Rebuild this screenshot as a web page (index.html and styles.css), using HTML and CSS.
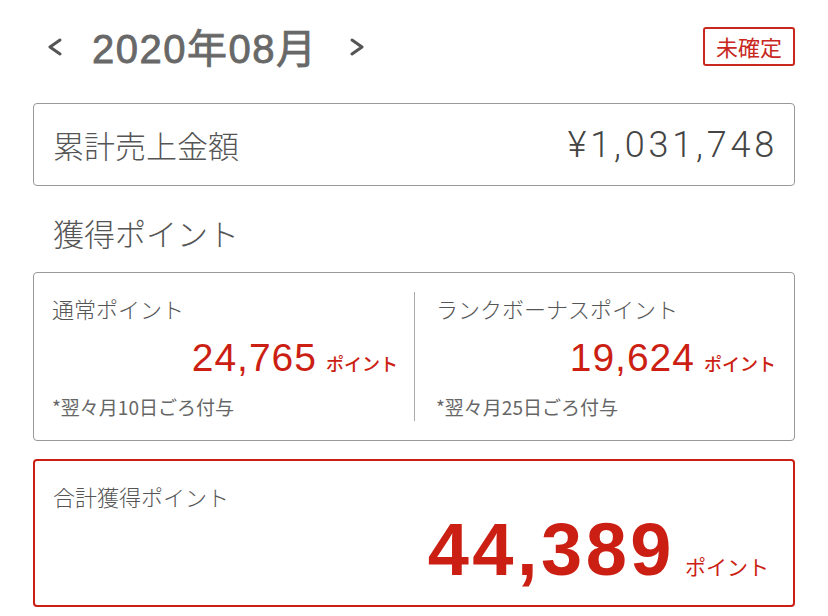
FILE: index.html
```html
<!DOCTYPE html>
<html lang="ja">
<head>
<meta charset="UTF-8" />
<meta name="viewport" content="width=device-width, initial-scale=1" />
<title>獲得ポイント</title>
<link rel="stylesheet" href="styles.css">
</head>
<body>

<div class="page">
  <div class="month-bar">
    <div class="month-nav">
      <svg class="chevron prev" width="16" height="18" viewBox="0 0 16 18"><path d="M13 2 L3 9 L13 16" /></svg>
      <span class="month">2020年08月</span>
      <svg class="chevron next" width="16" height="18" viewBox="0 0 16 18"><path d="M3 2 L13 9 L3 16" /></svg>
    </div>
    <span class="badge">未確定</span>
  </div>

  <div class="card sales">
    <span class="sales-label">累計売上金額</span>
    <span class="sales-amount">¥1,031,748</span>
  </div>

  <h2 class="section-title">獲得ポイント</h2>

  <div class="card points">
    <div class="point-col left">
      <div class="point-label">通常ポイント</div>
      <div class="point-value"><span class="num">24,765</span><span class="unit">ポイント</span></div>
      <div class="point-note">*翌々月10日ごろ付与</div>
    </div>
    <div class="divider"></div>
    <div class="point-col right">
      <div class="point-label">ランクボーナスポイント</div>
      <div class="point-value"><span class="num">19,624</span><span class="unit">ポイント</span></div>
      <div class="point-note">*翌々月25日ごろ付与</div>
    </div>
  </div>

  <div class="card total">
    <div class="point-label">合計獲得ポイント</div>
    <div class="total-value"><span class="total-num">44,389</span><span class="total-unit">ポイント</span></div>
  </div>
</div>

</body>
</html>
```

FILE: styles.css
```css
body {
  margin: 0;
  background: #fff;
  color: #555;
  font-family: "Liberation Sans", "Noto Sans CJK JP", sans-serif;
}
.page {
  width: 762px;
  margin: 0 auto;
  padding-top: 24px;
}
.month-bar {
  display: flex;
  align-items: center;
  justify-content: space-between;
  height: 44px;
}
.month-nav {
  display: flex;
  align-items: center;
  color: #686868;
}
.chevron path {
  fill: none;
  stroke: #555;
  stroke-width: 3;
  stroke-linecap: round;
  stroke-linejoin: round;
}
.chevron.prev {
  margin-left: 14px;
  margin-top: 2px;
}
.chevron.next {
  margin-top: 2px;
}
.month {
  font-size: 40px;
  letter-spacing: 1.5px;
  -webkit-text-stroke: 0.8px #686868;
  margin: 0 32px 0 29px;
}
.badge {
  border: 2px solid #c8281e;
  border-radius: 3px;
  color: #c8281e;
  font-size: 22px;
  font-family: "Noto Sans CJK JP", sans-serif;
  padding: 3px 11px;
  line-height: 29px;
}
.card {
  border: 1px solid #999;
  border-radius: 4px;
  box-sizing: border-box;
  background: #fff;
}
.sales {
  margin-top: 35px;
  height: 83px;
  display: flex;
  align-items: center;
  justify-content: space-between;
  padding: 0 20px 0 19px;
}
.sales-label {
  font-size: 31px;
  font-weight: 300;
  color: #555;
  font-family: "Noto Sans CJK JP", sans-serif;
}
.sales-amount {
  font-family: Roboto, "Liberation Sans", sans-serif;
  font-weight: 300;
  font-size: 36px;
  letter-spacing: 3.8px;
  margin-right: -4px;
  color: #444;
}
.section-title {
  margin: 27px 0 0 20px;
  font-size: 31px;
  font-weight: 300;
  color: #555;
  line-height: 40px;
  font-family: "Noto Sans CJK JP", sans-serif;
}
.points {
  margin-top: 19px;
  height: 169px;
  display: flex;
  padding: 19px 18px 19px 18px;
}
.point-col {
  display: flex;
  flex-direction: column;
}
.point-col.left {
  flex: 0 0 346px;
  padding-right: 16px;
}
.point-col.right {
  flex: 1;
  margin-left: 21px;
}
.divider {
  width: 1px;
  background: #aaa;
}
.point-label {
  font-size: 22px;
  font-weight: 300;
  color: #555;
  line-height: 32px;
  font-family: "Noto Sans CJK JP", sans-serif;
}
.point-value {
  display: flex;
  justify-content: flex-end;
  align-items: baseline;
  color: #cc1f14;
  margin-top: 12px;
}
.num {
  font-size: 39px;
  letter-spacing: 1px;
  margin-right: -1px;
  line-height: 44px;
}
.unit {
  font-size: 18px;
  font-weight: 500;
  margin-left: 10px;
  font-family: "Noto Sans CJK JP", sans-serif;
}
.point-note {
  font-size: 19px;
  line-height: 24px;
  color: #666;
  margin-top: 15px;
  font-family: "Noto Sans CJK JP", sans-serif;
}
.total {
  margin-top: 18px;
  height: 148px;
  border: 2px solid #cc1f14;
  padding: 19px 24px 0 18px;
}
.total-value {
  display: flex;
  justify-content: flex-end;
  align-items: baseline;
  color: #cc1f14;
}
.total-num {
  font-size: 74px;
  font-weight: bold;
  letter-spacing: 3.5px;
  margin-right: -2px;
  line-height: 76px;
}
.total-unit {
  font-size: 21px;
  margin-left: 12px;
  font-family: "Noto Sans CJK JP", sans-serif;
}
```
